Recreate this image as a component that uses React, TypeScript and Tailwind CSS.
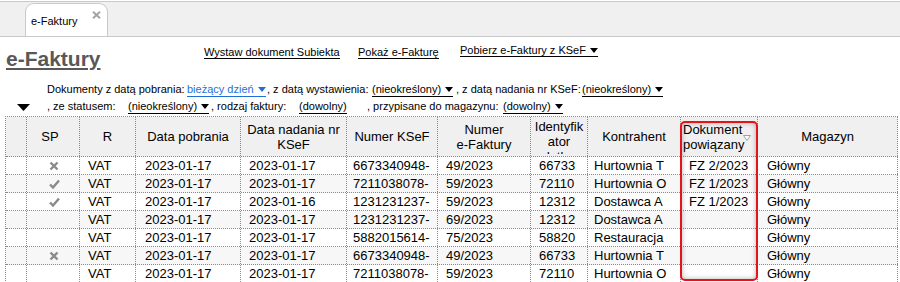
import React from "react";

const rows = [
  { sp: "x", date: "2023-01-17", ksefDate: "2023-01-17", ksef: "6673340948-", nr: "49/2023", id: "66733", k: "Hurtownia T", doc: "FZ 2/2023" },
  { sp: "v", date: "2023-01-17", ksefDate: "2023-01-17", ksef: "7211038078-", nr: "59/2023", id: "72110", k: "Hurtownia O", doc: "FZ 1/2023" },
  { sp: "v", date: "2023-01-17", ksefDate: "2023-01-16", ksef: "1231231237-", nr: "59/2023", id: "12312", k: "Dostawca A", doc: "FZ 1/2023" },
  { sp: "", date: "2023-01-17", ksefDate: "2023-01-17", ksef: "1231231237-", nr: "69/2023", id: "12312", k: "Dostawca A", doc: "" },
  { sp: "", date: "2023-01-17", ksefDate: "2023-01-17", ksef: "5882015614-", nr: "75/2023", id: "58820", k: "Restauracja", doc: "" },
  { sp: "x", date: "2023-01-17", ksefDate: "2023-01-17", ksef: "6673340948-", nr: "49/2023", id: "66733", k: "Hurtownia T", doc: "" },
  { sp: "", date: "2023-01-17", ksefDate: "2023-01-17", ksef: "7211038078-", nr: "59/2023", id: "72110", k: "Hurtownia O", doc: "" },
];

const cell = "shrink-0 border-r border-dotted border-[#8a8a8a] overflow-hidden whitespace-nowrap";

function Tri({ color = "#000" }: { color?: string }) {
  return (
    <svg width="8" height="5" viewBox="0 0 8 5" className="ml-[4px]">
      <polygon points="0,0 8,0 4,5" fill={color} />
    </svg>
  );
}

function Value({ text, blue, arrow = true }: { text: string; blue?: boolean; arrow?: boolean }) {
  return (
    <span
      className={`inline-flex h-[14px] items-center border-b leading-[13px] ${
        blue ? "border-[#1f6fd6] text-[#1f6fd6]" : "border-black"
      }`}
    >
      {text}
      {arrow && <Tri color={blue ? "#1f6fd6" : "#000"} />}
    </span>
  );
}

function SpIcon({ kind }: { kind: string }) {
  if (kind === "x")
    return (
      <svg width="10" height="10" viewBox="0 0 10 10">
        <path d="M1.5 1.5 L8.5 8.5 M8.5 1.5 L1.5 8.5" stroke="#8a8a8a" strokeWidth="2.4" />
      </svg>
    );
  if (kind === "v")
    return (
      <svg width="11" height="10" viewBox="0 0 11 10">
        <path d="M1 5.5 L4 8.5 L10 1.5" stroke="#8a8a8a" strokeWidth="2.4" fill="none" />
      </svg>
    );
  return null;
}

const link = "inline-flex h-[13px] items-center self-start border-b border-black leading-[12px]";

export default function App() {
  return (
    <div className="relative h-[282px] w-[900px] overflow-hidden bg-white font-['Liberation_Sans',Arial,sans-serif] text-black">
      {/* Tab bar */}
      <div className="mt-[1px] flex h-[36px] border-y border-[#c9c9c9] bg-[#f0f0f0] pl-[25px]">
        <div className="mt-[1px] flex h-[33px] w-[83px] rounded-t-[9px] border border-b-0 border-[#c9c9c9] bg-white pl-[5px] text-[11px]">
          <span className="mt-[11px] leading-[13px]">e-Faktury</span>
          <svg width="9" height="8" viewBox="0 0 9 8" className="ml-auto mr-[6px] mt-[7px]">
            <path d="M1 0.8 L8 7.2 M8 0.8 L1 7.2" stroke="#a3a3a3" strokeWidth="2" />
          </svg>
        </div>
      </div>

      {/* Title + actions */}
      <div className="flex h-[44px] items-start">
        <div className="w-[204px] shrink-0 pl-[6px] pt-[10px]">
          <span className="text-[21px] font-bold leading-[24px] text-[#585858] underline decoration-2 underline-offset-[2px]">
            e-Faktury
          </span>
        </div>
        <div className="flex items-start pt-[7px] text-[11px]">
          <div className="w-[154px]">
            <span className={link}>Wystaw dokument Subiekta</span>
          </div>
          <div className="w-[102px]">
            <span className={link}>Pokaż e-Fakturę</span>
          </div>
          <span className={link}>
            Pobierz e-Faktury z KSeF
            <Tri />
          </span>
        </div>
      </div>

      {/* Filters */}
      <div className="text-[11px]">
        <div className="flex h-[17px] items-center pl-[47px]">
          <span className="w-[140px] shrink-0">Dokumenty z datą pobrania:</span>
          <span className="w-[80px] shrink-0">
            <Value text="bieżący dzień" blue />
          </span>
          <span className="w-[105px] shrink-0">, z datą wystawienia:</span>
          <span className="w-[84px] shrink-0">
            <Value text="(nieokreślony)" />
          </span>
          <span className="w-[126px] shrink-0">, z datą nadania nr KSeF:</span>
          <span className="shrink-0">
            <Value text="(nieokreślony)" />
          </span>
        </div>
        <div className="flex h-[17px] items-center">
          <span className="flex w-[47px] shrink-0 pl-[17px] pt-[1px]">
            <svg width="13" height="7" viewBox="0 0 13 7">
              <polygon points="0,0 13,0 6.5,7" fill="#000" />
            </svg>
          </span>
          <span className="w-[81px] shrink-0">, ze statusem:</span>
          <span className="w-[83px] shrink-0">
            <Value text="(nieokreślony)" />
          </span>
          <span className="w-[88px] shrink-0">, rodzaj faktury:</span>
          <span className="w-[68px] shrink-0">
            <Value text="(dowolny)" arrow={false} />
          </span>
          <span className="w-[136px] shrink-0">, przypisane do magazynu:</span>
          <span className="shrink-0">
            <Value text="(dowolny)" />
          </span>
        </div>
      </div>

      {/* Grid */}
      <div className="ml-[5px] mt-[1px] w-[893px] border-l border-t border-dotted border-[#8a8a8a] text-[13px]">
        <div className="flex h-[40px] border-b border-dotted border-[#8a8a8a] bg-[#f0f0f0] leading-[15px]">
          <div className={`${cell} w-[21px]`} />
          <div className={`${cell} flex w-[53px] items-center justify-center pr-[6px]`}>SP</div>
          <div className={`${cell} flex w-[56px] items-center justify-center`}>R</div>
          <div className={`${cell} flex w-[105px] items-center justify-center`}>Data pobrania</div>
          <div className={`${cell} flex w-[106px] items-center justify-center text-center`}>
            Data nadania nr
            <br />
            KSeF
          </div>
          <div className={`${cell} flex w-[91px] items-center justify-center`}>Numer KSeF</div>
          <div className={`${cell} flex w-[93px] items-center justify-center text-center`}>
            Numer
            <br />
            e-Faktury
          </div>
          <div className={`${cell} w-[57px]`}>
            <div className="flex h-[37px] flex-col items-center overflow-hidden pt-[2px] text-center">
              <span>Identyfik</span>
              <span>ator</span>
              <span>podatkowy</span>
            </div>
          </div>
          <div className={`${cell} flex w-[93px] items-center justify-center`}>Kontrahent</div>
          <div className={`${cell} flex w-[77px] items-center pl-[2px]`}>
            <span>
              Dokument
              <br />
              powiązany
            </span>
            <svg width="8" height="6" viewBox="0 0 8 6" className="ml-[-1px] mt-[3px]">
              <polygon points="0.5,0.5 7.5,0.5 4,5.5" fill="#fff" stroke="#a0a0a0" strokeWidth="1" />
            </svg>
          </div>
          <div className={`${cell} flex w-[140px] items-center justify-center`}>Magazyn</div>
        </div>

        {rows.map((r, i) => (
          <div
            key={i}
            className={`flex h-[18px] border-b border-dotted border-[#8a8a8a] leading-[17px] ${
              i % 2 === 1 ? "bg-[#f7f7f7]" : "bg-white"
            }`}
          >
            <div className={`${cell} w-[21px]`} />
            <div className={`${cell} flex w-[53px] items-center justify-center pl-[2px]`}>
              <SpIcon kind={r.sp} />
            </div>
            <div className={`${cell} w-[56px] pl-[8px]`}>VAT</div>
            <div className={`${cell} w-[105px] pl-[9px]`}>{r.date}</div>
            <div className={`${cell} w-[106px] pl-[8px]`}>{r.ksefDate}</div>
            <div className={`${cell} w-[91px] pl-[6px]`}>{r.ksef}</div>
            <div className={`${cell} w-[93px] pl-[8px]`}>{r.nr}</div>
            <div className={`${cell} w-[57px] pl-[8px]`}>{r.id}</div>
            <div className={`${cell} w-[93px] pl-[6px]`}>{r.k}</div>
            <div className={`${cell} w-[77px] pl-[8px]`}>{r.doc}</div>
            <div className={`${cell} w-[140px] pl-[9px]`}>Główny</div>
          </div>
        ))}
      </div>

      {/* Highlight around "Dokument powiązany" column */}
      <div className="pointer-events-none absolute left-[680px] top-[121px] h-[160px] w-[78px] rounded-[5px] border-2 border-[#e5141b] shadow-[inset_0_0_5px_rgba(0,0,0,0.3)]" />
    </div>
  );
}
